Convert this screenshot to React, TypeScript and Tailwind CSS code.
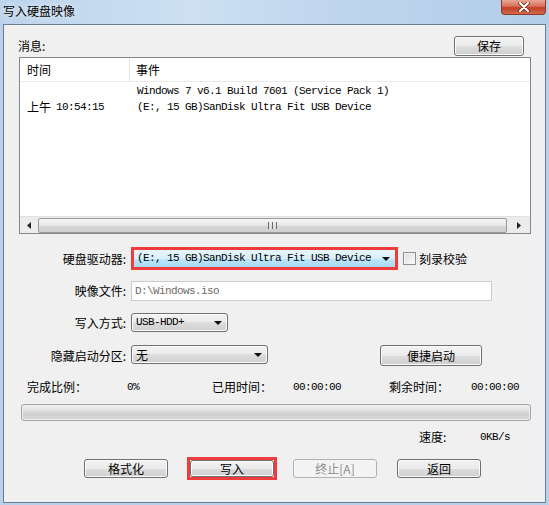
import React from 'react';

const cn = "[font-family:'Noto_Sans_CJK_SC','Liberation_Sans',sans-serif]";
const mono = "[font-family:'Liberation_Mono','Noto_Sans_CJK_SC',monospace] text-[11px] tracking-[-0.6px]";
const btn =
    'flex items-center justify-center border border-[#707070] rounded-[3px] bg-[linear-gradient(#f2f2f2_0%,#ebebeb_50%,#dddddd_50%,#cfcfcf_100%)] shadow-[inset_0_0_0_1px_#fcfcfc] text-[12px] leading-none text-black';

const Arrow: React.FC<{ dir?: 'down' | 'left' | 'right' }> = ({ dir = 'down' }) => {
    if (dir === 'left') {
        return (
            <svg width="4" height="7" viewBox="0 0 4 7">
                <path d="M4 0v7L0 3.5z" fill="#222" />
            </svg>
        );
    }
    if (dir === 'right') {
        return (
            <svg width="4" height="7" viewBox="0 0 4 7">
                <path d="M0 0v7L4 3.5z" fill="#222" />
            </svg>
        );
    }
    return (
        <svg width="8" height="4" viewBox="0 0 8 4">
            <path d="M0 0h8L4 4z" fill="#111" />
        </svg>
    );
};

const Label: React.FC<{ children: React.ReactNode }> = ({ children }) => (
    <div className="w-[123px] text-right pr-[1px] text-[12px] leading-none">{children}</div>
);

export default function App() {
    return (
        <div className={`w-[549px] h-[505px] flex flex-col bg-[#b9d1ea] text-black ${cn}`}>
            {/* title bar */}
            <div className="h-[24px] flex items-start justify-between bg-[linear-gradient(90deg,#bcd4ec_0%,#cde0f3_35%,#bfd6ed_60%,#b3cde8_100%)]">
                <div className="pl-[3px] pt-[4px] text-[12px] leading-[13px] [text-shadow:0_0_6px_#ffffff]">写入硬盘映像</div>
                <div className="mr-[3px] w-[45px] h-[15px] rounded-b-[4px] border border-t-0 border-[#8c3a2c] bg-[linear-gradient(#e9a896_0%,#d7705a_45%,#c13f26_55%,#d0684c_100%)] flex items-center justify-center">
                    <svg width="12" height="10" viewBox="0 0 12 10">
                        <path d="M2 1l8 8M10 1L2 9" stroke="#5b2a22" strokeWidth="3.4" strokeLinecap="round" />
                        <path d="M2 1l8 8M10 1L2 9" stroke="#ffffff" strokeWidth="2" strokeLinecap="round" />
                    </svg>
                </div>
            </div>

            {/* panel */}
            <div className="flex-1 mx-[3px] mb-[2px] border border-[#6b7d93] bg-[#f0f0f0] flex flex-col">
                {/* messages header */}
                <div className="mt-[11px] h-[20px] flex items-center justify-between pl-[14px] pr-[21px]">
                    <span className="text-[12px] leading-none">消息:</span>
                    <div className={`${btn} w-[70px] h-[20px]`}>保存</div>
                </div>

                {/* list view */}
                <div className="ml-[15px] mt-[1px] w-[512px] h-[177px] border border-[#828790] bg-white flex flex-col">
                    <div className="h-[24px] flex items-stretch border-b border-[#eaeaea] text-[12px] leading-none">
                        <div className="w-[110px] flex items-center pl-[7px] border-r border-[#e3e3e3]">时间</div>
                        <div className="flex items-center pl-[6px]">事件</div>
                    </div>
                    <div className="flex-1 pt-[1px]">
                        <div className="h-[16px] flex items-center">
                            <div className="w-[110px]" />
                            <div className={`pl-[7px] ${mono}`}>Windows 7 v6.1 Build 7601 (Service Pack 1)</div>
                        </div>
                        <div className="h-[16px] flex items-center">
                            <div className="w-[110px] pl-[7px] flex items-center gap-[5px]">
                                <span className="text-[12px] leading-none">上午</span>
                                <span className={mono}>10:54:15</span>
                            </div>
                            <div className={`pl-[7px] ${mono}`}>(E:, 15 GB)SanDisk Ultra Fit USB Device</div>
                        </div>
                    </div>
                    {/* horizontal scrollbar */}
                    <div className="h-[17px] flex items-center bg-[#ececec] border-t border-[#e2e2e2]">
                        <div className="w-[18px] h-full flex items-center justify-center">
                            <Arrow dir="left" />
                        </div>
                        <div className="w-[469px] h-[15px] rounded-[2px] border border-[#9a9a9a] bg-[linear-gradient(#f6f6f6_0%,#e6e6e6_50%,#d6d6d6_51%,#d0d0d0_100%)] flex items-center justify-center">
                            <div className="flex gap-[1px]">
                                <div className="w-[1px] h-[7px] bg-[#6c6c6c]" />
                                <div className="w-[1px] h-[7px] bg-[#e8e8e8]" />
                                <div className="w-[1px] h-[7px] bg-[#6c6c6c]" />
                                <div className="w-[1px] h-[7px] bg-[#e8e8e8]" />
                                <div className="w-[1px] h-[7px] bg-[#6c6c6c]" />
                            </div>
                        </div>
                        <div className="flex-1 h-full flex items-center justify-center">
                            <Arrow dir="right" />
                        </div>
                    </div>
                </div>

                {/* drive */}
                <div className="mt-[13px] h-[23px] flex items-center">
                    <Label>硬盘驱动器:</Label>
                    <div className="ml-[4px] w-[267px] h-[23px] border-[3px] border-[#ef3b3b] bg-[linear-gradient(#e8f5fc_0%,#d9effa_50%,#bee6fd_51%,#a7d9f5_100%)] flex items-center justify-between pl-[3px] pr-[5px]">
                        <span className={mono}>(E:, 15 GB)SanDisk Ultra Fit USB Device</span>
                        <Arrow />
                    </div>
                    <div className="ml-[5px] w-[13px] h-[13px] border border-[#8f8f8f] bg-[linear-gradient(135deg,#dcdcdc,#fbfbfb)] shadow-[inset_0_0_0_1px_#f4f4f4]" />
                    <span className="ml-[3px] text-[12px] leading-none">刻录校验</span>
                </div>

                {/* image file */}
                <div className="mt-[11px] h-[20px] flex items-center">
                    <Label>映像文件:</Label>
                    <div className="ml-[4px] w-[361px] h-[20px] border border-[#c9cbcf] bg-white flex items-center pl-[3px]">
                        <span className={`${mono} text-[#6d6d6d]`}>D:\Windows.iso</span>
                    </div>
                </div>

                {/* write mode */}
                <div className="mt-[12px] h-[19px] flex items-center">
                    <Label>写入方式:</Label>
                    <div className={`${btn} ml-[4px] w-[97px] h-[19px] !justify-between pl-[4px] pr-[5px]`}>
                        <span className={`${mono} text-[10px] tracking-[-0.4px]`}>USB-HDD+</span>
                        <Arrow />
                    </div>
                </div>

                {/* hidden partition */}
                <div className="mt-[13px] h-[21px] flex items-center">
                    <Label>隐藏启动分区:</Label>
                    <div className={`${btn} ml-[4px] w-[137px] h-[19px] !justify-between pl-[4px] pr-[5px] self-start`}>
                        <span>无</span>
                        <Arrow />
                    </div>
                    <div className={`${btn} ml-[112px] w-[102px] h-[21px]`}>便捷启动</div>
                </div>

                {/* stats */}
                <div className="mt-[13px] h-[16px] flex items-center pl-[23px] text-[12px] leading-none">
                    <span className="w-[100px]">完成比例：</span>
                    <span className={`w-[85px] ${mono}`}>0%</span>
                    <span className="w-[81px]">已用时间：</span>
                    <span className={`w-[96px] ${mono}`}>00:00:00</span>
                    <span className="w-[82px]">剩余时间：</span>
                    <span className={mono}>00:00:00</span>
                </div>

                {/* progress */}
                <div className="mt-[9px] ml-[17px] w-[510px] h-[17px] rounded-[3px] border border-[#a5a5a5] bg-[linear-gradient(#f3f3f3_0%,#e2e2e2_35%,#cfcfcf_60%,#d8d8d8_100%)] shadow-[inset_0_0_0_1px_#eeeeee]" />

                {/* speed */}
                <div className="mt-[8px] h-[16px] flex items-center pl-[415px] text-[12px] leading-none">
                    <span className="w-[61px]">速度:</span>
                    <span className={mono}>0KB/s</span>
                </div>

                {/* buttons */}
                <div className="mt-[12px] h-[23px] flex items-center pl-[80px]">
                    <div className={`${btn} w-[84px] h-[19px]`}>格式化</div>
                    <div className="ml-[19px] w-[90px] h-[23px] border-[3px] border-[#ef3b3b] flex">
                        <div className={`${btn} flex-1`}>写入</div>
                    </div>
                    <div className="ml-[16px] w-[84px] h-[19px] flex items-center justify-center border border-[#adb2b5] rounded-[3px] bg-[#f4f4f4] text-[12px] leading-none text-[#8c8c8c]">
                        终止[A]
                    </div>
                    <div className={`${btn} ml-[20px] w-[84px] h-[19px]`}>返回</div>
                </div>
            </div>
        </div>
    );
}
